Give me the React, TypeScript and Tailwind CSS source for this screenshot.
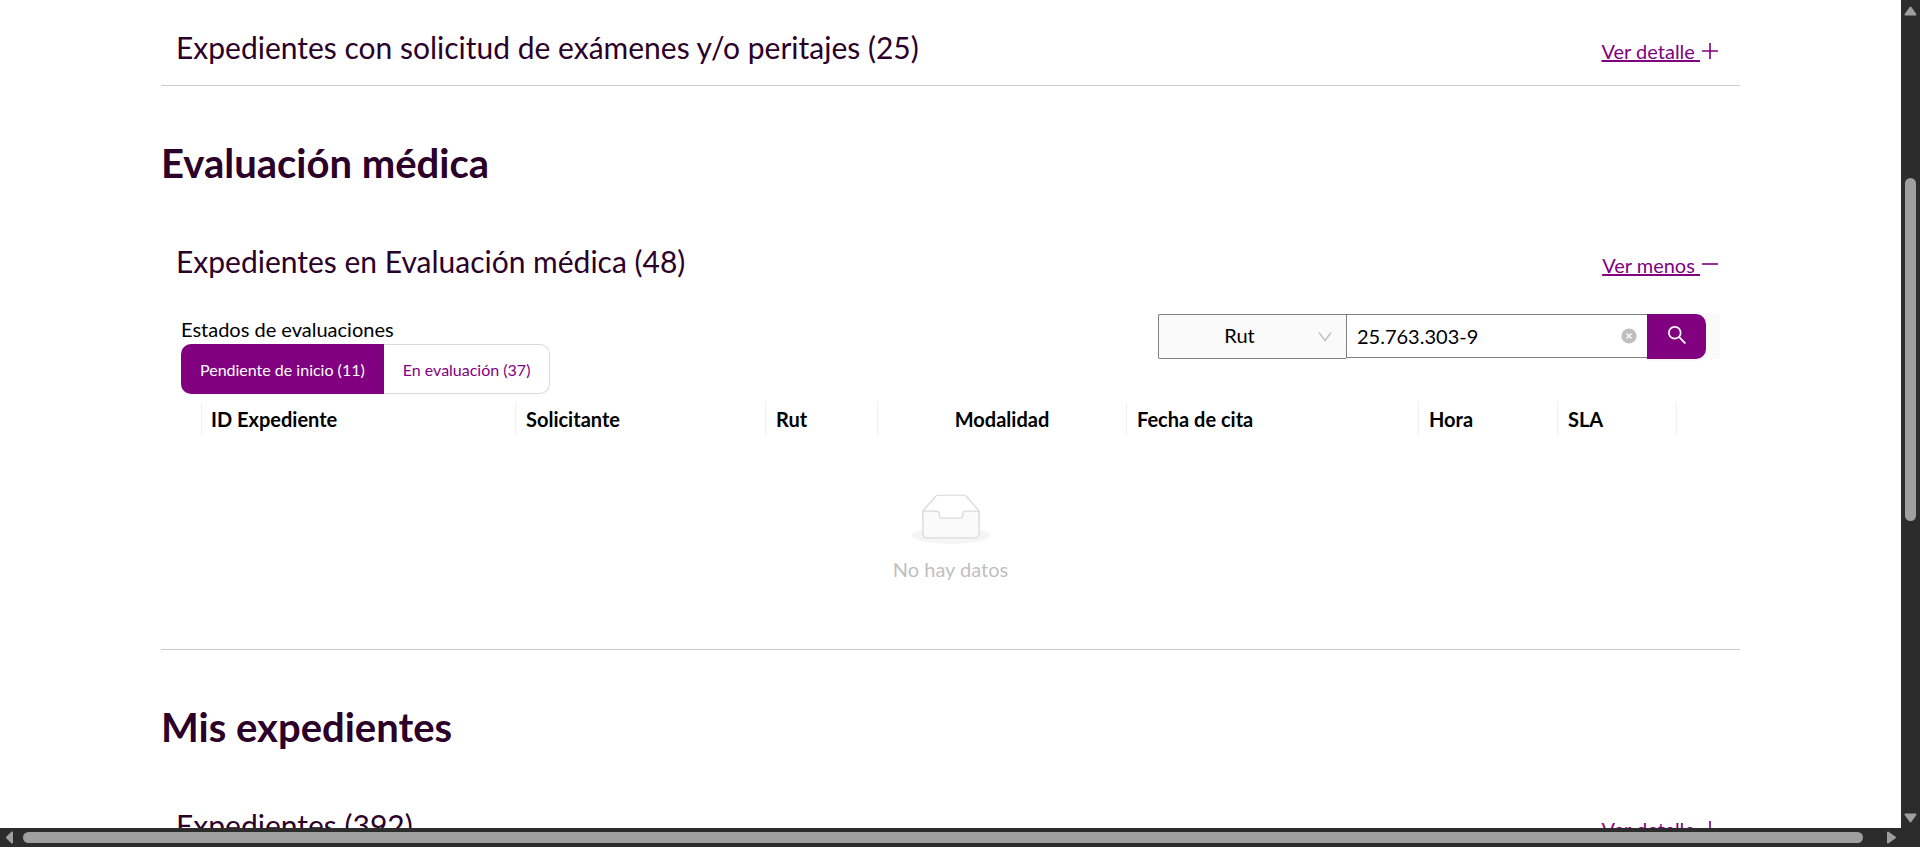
import { useState, type ReactNode } from "react";

function PlusIcon() {
  return (
    <svg className="h-5 w-5 shrink-0" viewBox="0 0 20 20" fill="currentColor" aria-hidden="true">
      <path d="M9.2 2h1.6v7.2H18v1.6h-7.2V18H9.2v-7.2H2V9.2h7.2z" />
    </svg>
  );
}

function MinusIcon() {
  return (
    <svg className="h-5 w-5 shrink-0" viewBox="0 0 20 20" fill="currentColor" aria-hidden="true">
      <path d="M2 8.2h16v1.6H2z" />
    </svg>
  );
}

function SearchIcon() {
  return (
    <svg className="h-5 w-5" viewBox="64 64 896 896" fill="currentColor" aria-hidden="true">
      <path d="M909.6 854.5L649.9 594.8C690.2 542.7 712 479 712 412c0-80.2-31.3-155.4-87.9-212.1-56.6-56.7-132-87.9-212.1-87.9s-155.5 31.3-212.1 87.9C143.2 256.5 112 331.8 112 412c0 80.1 31.3 155.5 87.9 212.1C256.5 680.8 331.8 712 412 712c67 0 130.6-21.8 182.7-62l259.7 259.6a8.2 8.2 0 0011.6 0l43.6-43.5a8.2 8.2 0 000-11.6zM570.4 570.4C528 612.7 471.8 636 412 636s-116-23.3-158.4-65.6C211.3 528 188 471.8 188 412s23.3-116.1 65.6-158.4C296 211.3 352.2 188 412 188s116.1 23.2 158.4 65.6S636 352.2 636 412s-23.3 116.1-65.6 158.4z" />
    </svg>
  );
}

function DownIcon() {
  return (
    <svg className="h-4 w-4" viewBox="64 64 896 896" fill="currentColor" aria-hidden="true">
      <path d="M884 256h-75c-5.1 0-9.9 2.5-12.9 6.6L512 654.2 227.9 262.6c-3-4.1-7.8-6.6-12.9-6.6h-75c-6.5 0-10.3 7.4-6.5 12.7l352.6 486.1c12.8 17.6 39 17.6 51.7 0l352.6-486.1c3.9-5.3.1-12.7-6.4-12.7z" />
    </svg>
  );
}

function ClearIcon() {
  return (
    <svg className="h-4 w-4" viewBox="0 0 16 16" aria-hidden="true">
      <circle cx="8" cy="8" r="7.6" fill="currentColor" />
      <path d="M5.5 5.5l5 5M10.5 5.5l-5 5" stroke="#fff" strokeWidth="1.3" />
    </svg>
  );
}

function EmptyIcon() {
  return (
    <svg className="h-[50px] w-[78px]" viewBox="0 0 64 41" aria-hidden="true">
      <g transform="translate(0 1)" fill="none" fillRule="evenodd">
        <ellipse fill="#f5f5f5" cx="32" cy="33" rx="32" ry="7" />
        <g fillRule="nonzero" stroke="#d9d9d9">
          <path d="M55 12.76L44.854 1.258C44.367.474 43.656 0 42.907 0H21.093c-.749 0-1.46.474-1.947 1.257L9 12.761V22h46v-9.24z" />
          <path
            d="M41.613 15.931c0-1.605.994-2.93 2.227-2.931H55v18.137C55 33.26 53.68 35 52.05 35h-40.1C10.32 35 9 33.259 9 31.137V13h11.16c1.233 0 2.227 1.323 2.227 2.928v.022c0 1.605 1.005 2.901 2.237 2.901h14.752c1.232 0 2.237-1.308 2.237-2.913v-.007z"
            fill="#fafafa"
          />
        </g>
      </g>
    </svg>
  );
}

function PanelHeader({ title, open = false }: { title: string; open?: boolean }) {
  return (
    <div className="flex items-baseline justify-between pr-5 pl-[15px]">
      <h3 className="text-[30px] leading-[46px] text-[#2b0029]">{title}</h3>
      <a href="#" className="flex items-center text-xl leading-[30px] text-[#800080]">
        <span className="whitespace-pre underline decoration-2">{open ? "Ver menos " : "Ver detalle "}</span>
        {open ? <MinusIcon /> : <PlusIcon />}
      </a>
    </div>
  );
}

function SectionTitle({ children }: { children: ReactNode }) {
  return <h2 className="mt-[47px] mb-[45px] text-[40px] leading-[60px] font-bold text-[#2b0029]">{children}</h2>;
}

const columns = [
  { label: "", width: "w-5", align: "text-left" },
  { label: "ID Expediente", width: "w-[315px]", align: "text-left" },
  { label: "Solicitante", width: "w-[250px]", align: "text-left" },
  { label: "Rut", width: "w-[112px]", align: "text-left" },
  { label: "Modalidad", width: "w-[249px]", align: "text-center" },
  { label: "Fecha de cita", width: "w-[292px]", align: "text-left" },
  { label: "Hora", width: "w-[139px]", align: "text-left" },
  { label: "SLA", width: "w-[119px]", align: "text-left" },
  { label: "", width: "w-[43px]", align: "text-left" },
];

function ResultsTable() {
  return (
    <table className="mt-[9px] w-full table-fixed border-collapse text-xl">
      <colgroup>
        {columns.map((c, i) => (
          <col key={i} className={c.width} />
        ))}
      </colgroup>
      <thead>
        <tr>
          {columns.map((c, i) => (
            <th key={i} className={`p-0 leading-10 font-bold ${c.align}`}>
              <div
                className={`flex h-8 items-center px-[10px] ${c.align === "text-center" ? "justify-center" : ""} ${
                  i < columns.length - 1 ? "border-r border-[#f0f0f0]" : ""
                }`}
              >
                {c.label}
              </div>
            </th>
          ))}
        </tr>
      </thead>
      <tbody>
        <tr>
          <td colSpan={columns.length} className="px-5 pt-[59px] pb-[64px]">
            <div className="flex flex-col items-center gap-[9px] text-[#bfbfbf]">
              <EmptyIcon />
              <p className="leading-8">No hay datos</p>
            </div>
          </td>
        </tr>
      </tbody>
    </table>
  );
}

function SearchBar() {
  const [rut, setRut] = useState("25.763.303-9");
  return (
    <form className="flex items-start bg-white text-xl" onSubmit={(e) => e.preventDefault()}>
      <div className="relative">
        <select
          aria-label="Buscar por"
          className="h-[45px] w-[188px] appearance-none rounded-l-xs border border-r-0 border-[#808080] bg-[#fafafa] pr-[26px] pb-[3px] text-center text-black"
        >
          <option>Rut</option>
        </select>
        <span className="pointer-events-none absolute inset-y-0 right-[13px] flex items-center text-[#bfbfbf]">
          <DownIcon />
        </span>
      </div>
      <div className="relative">
        <input
          aria-label="Rut"
          value={rut}
          onChange={(e) => setRut(e.target.value)}
          className="h-11 w-[301px] border border-r-0 border-[#808080] bg-white pr-10 pl-[10px] text-black outline-none"
        />
        <button
          type="button"
          aria-label="Limpiar"
          onClick={() => setRut("")}
          className="absolute inset-y-0 right-[10px] flex items-center text-[#bfbfbf]"
        >
          <ClearIcon />
        </button>
      </div>
      <div className="bg-[#fafafa] pr-[14px]">
        <button
          type="submit"
          aria-label="Buscar"
          className="flex h-[45px] w-[59px] items-center justify-center rounded-r-[10px] bg-[#800080] pb-1 text-white shadow-[0_2px_0_rgba(0,0,0,0.03)]"
        >
          <SearchIcon />
        </button>
      </div>
    </form>
  );
}

function Triangle({ d }: { d: string }) {
  return (
    <svg className="h-[19px] w-[19px] shrink-0" viewBox="0 0 19 19" aria-hidden="true">
      <path d={d} fill="#9f9f9f" stroke="#9f9f9f" strokeWidth="2" strokeLinejoin="round" />
    </svg>
  );
}

export default function App() {
  return (
    <div className="grid h-screen grid-cols-[1fr_19px] grid-rows-[1fr_19px] bg-[#2c2c2c] font-['Lato',sans-serif]">
      <main className="min-h-0 overflow-hidden bg-white px-[161px] pt-6">
        <section className="border-b border-[#cccccc] pb-[15px]">
          <PanelHeader title="Expedientes con solicitud de exámenes y/o peritajes (25)" />
        </section>

        <SectionTitle>Evaluación médica</SectionTitle>
        <section className="border-b border-[#cccccc]">
          <PanelHeader title="Expedientes en Evaluación médica (48)" open />
          <div className="px-5 pt-[30px]">
            <div className="flex items-start justify-between">
              <div className="text-xl">
                <p className="leading-[30px]">Estados de evaluaciones</p>
                <div className="flex text-base">
                  <button type="button" className="h-[50px] rounded-l-[10px] bg-[#800080] px-[19px] pt-0.5 text-white">
                    Pendiente de inicio (11)
                  </button>
                  <button
                    type="button"
                    className="h-[50px] rounded-r-[10px] border border-l-0 border-[#d9d9d9] px-[19px] pt-0.5 text-[#800080]"
                  >
                    En evaluación (37)
                  </button>
                </div>
              </div>
              <SearchBar />
            </div>
            <ResultsTable />
          </div>
        </section>

        <SectionTitle>Mis expedientes</SectionTitle>
        <section className="border-b border-[#cccccc] pb-[15px]">
          <PanelHeader title="Expedientes (392)" />
        </section>
      </main>

      <div className="flex flex-col items-center" aria-hidden="true">
        <Triangle d="M9.5 7.5L14.5 14.5H4.5z" />
        <div className="flex min-h-0 w-[11px] flex-1 flex-col">
          <div className="flex-[159]" />
          <div className="flex-[343] rounded-full bg-[#9f9f9f]" />
          <div className="flex-[288]" />
        </div>
        <Triangle d="M9.5 12.5L14.5 5.5H4.5z" />
      </div>

      <div className="flex items-center" aria-hidden="true">
        <Triangle d="M7 9.5L12 4.5V14.5z" />
        <div className="flex h-[11px] min-w-0 flex-1 pl-1">
          <div className="flex-[1840] rounded-full bg-[#9f9f9f]" />
          <div className="flex-[19]" />
        </div>
        <Triangle d="M13 9.5L6 4.5V14.5z" />
      </div>
    </div>
  );
}
